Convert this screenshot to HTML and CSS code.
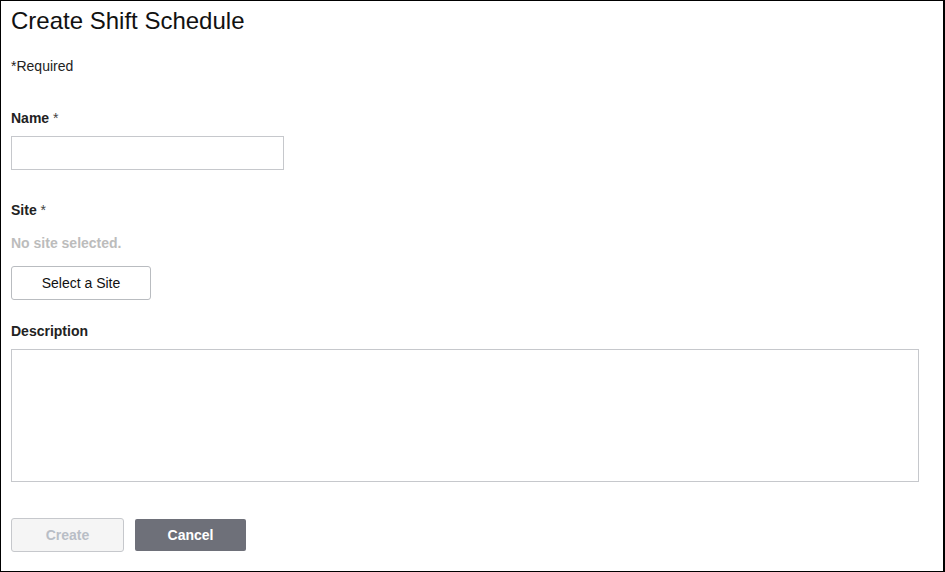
FILE: index.html
```html
<!DOCTYPE html>
<html>
<head>
<meta charset="utf-8">
<link rel="stylesheet" href="styles.css">
</head>
<body>
<div class="page">
  <h1 class="title">Create Shift Schedule</h1>
  <p class="required">*Required</p>
  <label class="label label-name">Name <span class="star">*</span></label>
  <input class="text-input" type="text">
  <label class="label label-site">Site <span class="star">*</span></label>
  <p class="no-site">No site selected.</p>
  <button class="btn-select">Select a Site</button>
  <label class="label label-desc">Description</label>
  <textarea class="desc"></textarea>
  <div class="actions">
    <button class="btn-create">Create</button>
    <button class="btn-cancel">Cancel</button>
  </div>
</div>
</body>
</html>
```
FILE: styles.css
```css
html, body {
  margin: 0;
  padding: 0;
  background: #fff;
}
.page {
  box-sizing: border-box;
  width: 945px;
  height: 572px;
  border: 1px solid #000;
  border-right-width: 2px;
  padding: 6px 0 0 10px;
  font-family: "Liberation Sans", Arial, sans-serif;
  color: #222;
  display: flex;
  flex-direction: column;
  align-items: flex-start;
}
.title {
  margin: 0;
  font-size: 24px;
  line-height: 28px;
  font-weight: normal;
  color: #111;
}
.required {
  margin: 21px 0 0;
  font-size: 14px;
  line-height: 20px;
  color: #222;
}
.label {
  display: block;
  font-size: 14px;
  line-height: 20px;
  font-weight: bold;
  color: #222;
}
.star {
  font-weight: normal;
  color: #444;
}
.label-name { margin-top: 32px; }
.text-input {
  box-sizing: border-box;
  margin: 8px 0 0;
  width: 273px;
  height: 34px;
  border: 1px solid #c6c8cc;
  border-radius: 0;
  padding: 0 8px;
  outline: none;
}
.label-site { margin-top: 30px; }
.no-site {
  margin: 13px 0 0;
  font-size: 14px;
  line-height: 20px;
  font-weight: bold;
  color: #bcbcbc;
}
.btn-select {
  box-sizing: border-box;
  margin-top: 13px;
  width: 140px;
  height: 34px;
  background: #fff;
  border: 1px solid #b9bcc0;
  border-radius: 3px;
  font-family: "Liberation Sans", Arial, sans-serif;
  font-size: 14px;
  color: #111;
  padding: 0;
}
.label-desc { margin-top: 21px; }
.desc {
  box-sizing: border-box;
  margin: 8px 0 0;
  width: 908px;
  height: 133px;
  border: 1px solid #c6c8cc;
  border-radius: 0;
  resize: none;
  outline: none;
  padding: 6px;
}
.actions {
  margin-top: 36px;
  display: flex;
  align-items: center;
  gap: 11px;
}
.btn-create {
  box-sizing: border-box;
  width: 113px;
  height: 34px;
  background: #f5f5f5;
  border: 1px solid #c6c8cc;
  border-radius: 3px;
  font-family: "Liberation Sans", Arial, sans-serif;
  font-size: 14px;
  font-weight: bold;
  color: #b9bec6;
  padding: 0 0 1px;
}
.btn-cancel {
  box-sizing: border-box;
  width: 111px;
  height: 32px;
  background: #6e7079;
  border: none;
  border-radius: 2px;
  font-family: "Liberation Sans", Arial, sans-serif;
  font-size: 14px;
  font-weight: bold;
  color: #fff;
  padding: 0 0 1px;
}
```
